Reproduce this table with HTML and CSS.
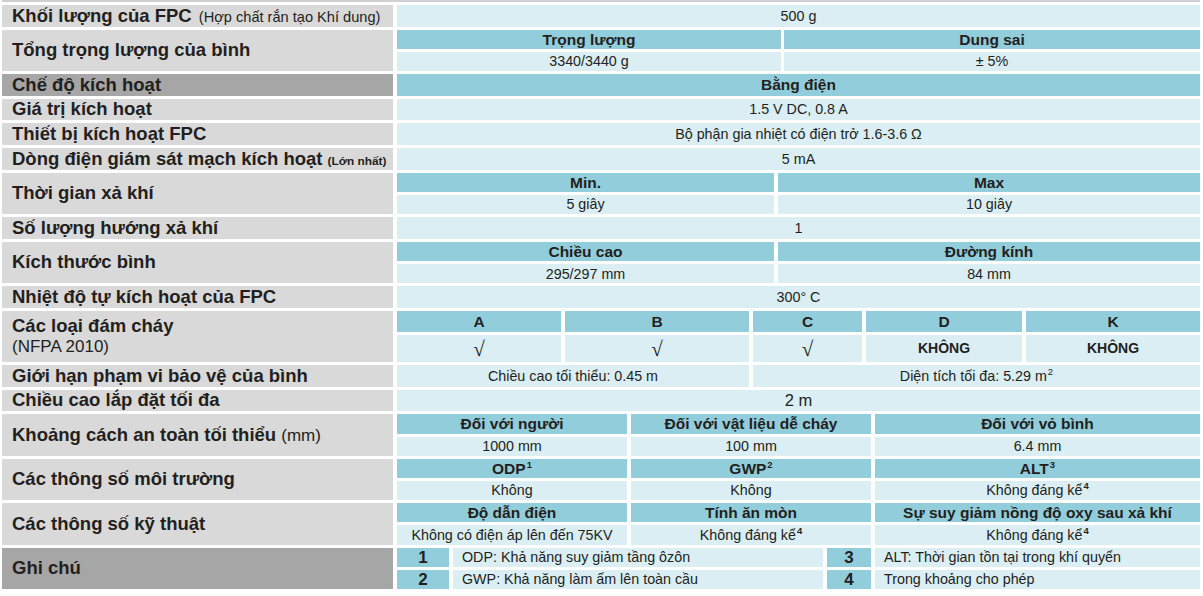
FILE: index.html
```html
<!DOCTYPE html>
<html lang="vi">
<head>
<meta charset="utf-8">
<title>Thông số kỹ thuật FPC</title>
<link rel="stylesheet" href="styles.css">
</head>
<body>
<div class="sheet">
  <div class="topline"></div>

  <div class="row">
    <div class="label"><span>Khối lượng của FPC <span class="aside">(Hợp chất rắn tạo Khí dung)</span></span></div>
    <div class="val">500 g</div>
  </div>

  <div class="row dbl">
    <div class="label">Tổng trọng lượng của bình</div>
    <div class="sub c2a">
      <div class="val hd">Trọng lượng</div>
      <div class="val hd">Dung sai</div>
      <div class="val">3340/3440 g</div>
      <div class="val">± 5%</div>
    </div>
  </div>

  <div class="row">
    <div class="label dark">Chế độ kích hoạt</div>
    <div class="val hd">Bằng điện</div>
  </div>

  <div class="row">
    <div class="label">Giá trị kích hoạt</div>
    <div class="val">1.5 V DC, 0.8 A</div>
  </div>

  <div class="row">
    <div class="label">Thiết bị kích hoạt FPC</div>
    <div class="val">Bộ phận gia nhiệt có điện trở 1.6-3.6 Ω</div>
  </div>

  <div class="row">
    <div class="label"><span>Dòng điện giám sát mạch kích hoạt <span class="tiny">(Lớn nhất)</span></span></div>
    <div class="val">5 mA</div>
  </div>

  <div class="row dbl">
    <div class="label">Thời gian xả khí</div>
    <div class="sub c2b">
      <div class="val hd">Min.</div>
      <div class="val hd">Max</div>
      <div class="val">5 giây</div>
      <div class="val">10 giây</div>
    </div>
  </div>

  <div class="row">
    <div class="label">Số lượng hướng xả khí</div>
    <div class="val">1</div>
  </div>

  <div class="row dbl">
    <div class="label">Kích thước bình</div>
    <div class="sub c2b">
      <div class="val hd">Chiều cao</div>
      <div class="val hd">Đường kính</div>
      <div class="val">295/297 mm</div>
      <div class="val">84 mm</div>
    </div>
  </div>

  <div class="row">
    <div class="label">Nhiệt độ tự kích hoạt của FPC</div>
    <div class="val">300° C</div>
  </div>

  <div class="row tall">
    <div class="label stack"><span>Các loại đám cháy</span><span class="aside2">(NFPA 2010)</span></div>
    <div class="sub c5">
      <div class="val hd">A</div>
      <div class="val hd">B</div>
      <div class="val hd">C</div>
      <div class="val hd">D</div>
      <div class="val hd">K</div>
      <div class="val check">√</div>
      <div class="val check">√</div>
      <div class="val check">√</div>
      <div class="val strong">KHÔNG</div>
      <div class="val strong">KHÔNG</div>
    </div>
  </div>

  <div class="row">
    <div class="label">Giới hạn phạm vi bảo vệ của bình</div>
    <div class="sub one c2c">
      <div class="val">Chiều cao tối thiểu: 0.45 m</div>
      <div class="val"><span>Diện tích tối đa: 5.29 m<sup>2</sup></span></div>
    </div>
  </div>

  <div class="row">
    <div class="label">Chiều cao lắp đặt tối đa</div>
    <div class="val big">2 m</div>
  </div>

  <div class="row dbl">
    <div class="label"><span>Khoảng cách an toàn tối thiểu <span class="aside2">(mm)</span></span></div>
    <div class="sub c3">
      <div class="val hd">Đối với người</div>
      <div class="val hd">Đối với vật liệu dễ cháy</div>
      <div class="val hd">Đối với vỏ bình</div>
      <div class="val">1000 mm</div>
      <div class="val">100 mm</div>
      <div class="val">6.4 mm</div>
    </div>
  </div>

  <div class="row dbl">
    <div class="label">Các thông số môi trường</div>
    <div class="sub c3">
      <div class="val hd"><span>ODP<sup>1</sup></span></div>
      <div class="val hd"><span>GWP<sup>2</sup></span></div>
      <div class="val hd"><span>ALT<sup>3</sup></span></div>
      <div class="val">Không</div>
      <div class="val">Không</div>
      <div class="val"><span>Không đáng kể<sup class="b">4</sup></span></div>
    </div>
  </div>

  <div class="row dbl">
    <div class="label">Các thông số kỹ thuật</div>
    <div class="sub c3">
      <div class="val hd">Độ dẫn điện</div>
      <div class="val hd">Tính ăn mòn</div>
      <div class="val hd">Sự suy giảm nồng độ oxy sau xả khí</div>
      <div class="val">Không có điện áp lên đến 75KV</div>
      <div class="val"><span>Không đáng kể<sup class="b">4</sup></span></div>
      <div class="val"><span>Không đáng kể<sup class="b">4</sup></span></div>
    </div>
  </div>

  <div class="row dbl">
    <div class="label dark">Ghi chú</div>
    <div class="sub c4">
      <div class="val hd num">1</div>
      <div class="val left">ODP: Khả năng suy giảm tầng ôzôn</div>
      <div class="val hd num">3</div>
      <div class="val left">ALT: Thời gian tồn tại trong khí quyển</div>
      <div class="val hd num">2</div>
      <div class="val left">GWP: Khả năng làm ấm lên toàn cầu</div>
      <div class="val hd num">4</div>
      <div class="val left">Trong khoảng cho phép</div>
    </div>
  </div>
</div>
</body>
</html>
```

FILE: styles.css
```css
html, body {
  margin: 0;
  padding: 0;
  background: #ffffff;
}

body {
  font-family: "Liberation Sans", Arial, "DejaVu Sans", sans-serif;
  color: #231f20;
}

.sheet {
  display: flex;
  flex-direction: column;
  gap: 3px;
  width: 1198px;
  padding-left: 2px;
}

.topline {
  height: 2px;
  background: #d0d0d0;
}

.row {
  display: grid;
  grid-template-columns: 391px 803px;
  column-gap: 4px;
  height: 21.7px;
}

.row.dbl {
  height: 41.4px;
}

.row.tall {
  height: 51px;
}

.label {
  background: #d9d9d9;
  font-weight: bold;
  font-size: 18.5px;
  padding-left: 10px;
  display: flex;
  align-items: center;
  white-space: nowrap;
  line-height: 1;
}

.label.dark {
  background: #a6a6a6;
}

.label.stack {
  flex-direction: column;
  align-items: flex-start;
  justify-content: center;
  line-height: 21px;
}

.aside {
  font-weight: normal;
  font-size: 14.6px;
  margin-left: 2px;
}

.aside2 {
  font-weight: normal;
  font-size: 17px;
}

.tiny {
  font-size: 11.8px;
}

.val {
  background: #daeef3;
  display: flex;
  align-items: center;
  justify-content: center;
  font-size: 14.3px;
  white-space: nowrap;
  line-height: 1;
}

.val.hd {
  background: #92cddc;
  font-weight: bold;
  font-size: 15.5px;
}

.val.big {
  font-size: 16.5px;
}

.val.check {
  font-family: "Liberation Serif", "Times New Roman", serif;
  font-size: 21px;
  padding-top: 2px;
}

.val.strong {
  font-weight: bold;
  font-size: 14px;
}

.val.num {
  font-size: 17px;
}

.val.left {
  justify-content: flex-start;
  padding-left: 9px;
}

sup {
  font-size: 9.5px;
  line-height: 0;
  vertical-align: 6px;
  margin-left: 1px;
}

sup.b {
  font-weight: bold;
}

.sub {
  display: grid;
  row-gap: 3px;
  column-gap: 4px;
  grid-auto-rows: 1fr;
}

.sub.one {
  grid-template-rows: 1fr;
}

.c2a {
  grid-template-columns: 384px 1fr;
  column-gap: 3px;
}

.c2b {
  grid-template-columns: 377px 1fr;
}

.c2c {
  grid-template-columns: 352px 1fr;
}

.c5 {
  grid-template-columns: 164px 184px 109px 156px 1fr;
  grid-template-rows: 21px 1fr;
}

.c3 {
  grid-template-columns: 230px 240px 1fr;
}

.c4 {
  grid-template-columns: 52px 370px 44px 1fr;
}
```
